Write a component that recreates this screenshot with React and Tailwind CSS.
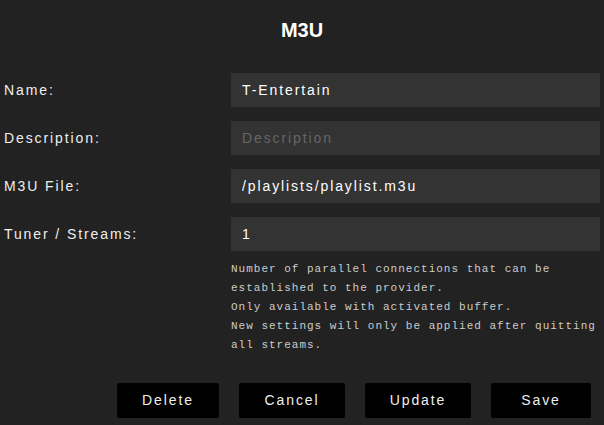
import React from 'react';

const Row = ({ label, value, placeholder }) => (
  <div className="flex items-center h-[34px]">
    <label className="w-[227px] shrink-0 text-[14px] tracking-[1.9px] text-[#eee]">{label}</label>
    <input
      className="flex-1 h-[34px] bg-[#333] px-[11px] text-[14px] tracking-[1.9px] text-white placeholder:text-[#666] outline-none"
      defaultValue={value}
      placeholder={placeholder}
    />
  </div>
);

const Button = ({ children, width }) => (
  <button className={`${width} h-[35px] rounded-[2px] bg-black text-[14px] tracking-[1.9px] text-[#eee]`}>{children}</button>
);

export default function App() {
  return (
    <div className="w-[604px] h-[425px] bg-[#222] px-1 font-['Liberation_Sans',Arial,sans-serif] overflow-hidden">
      <h1 className="pt-[18px] text-center text-[20px] leading-[24px] font-bold text-white">M3U</h1>
      <div className="mt-[31px] flex flex-col gap-[14px]">
        <Row label="Name:" value="T-Entertain" />
        <Row label="Description:" placeholder="Description" />
        <Row label="M3U File:" value="/playlists/playlist.m3u" />
        <Row label="Tuner / Streams:" value="1" />
      </div>
      <div className="ml-[227px] mt-[9px] font-['Liberation_Mono',monospace] text-[11px] leading-[19px] tracking-[1px] text-[#ccc]">
        <p>Number of parallel connections that can be established to the provider.</p>
        <p>Only available with activated buffer.</p>
        <p>New settings will only be applied after quitting all streams.</p>
      </div>
      <div className="mt-[28px] flex justify-end gap-[20px] pr-[9px]">
        <Button width="w-[102px]">Delete</Button>
        <Button width="w-[106px]">Cancel</Button>
        <Button width="w-[106px]">Update</Button>
        <Button width="w-[100px]">Save</Button>
      </div>
    </div>
  );
}
